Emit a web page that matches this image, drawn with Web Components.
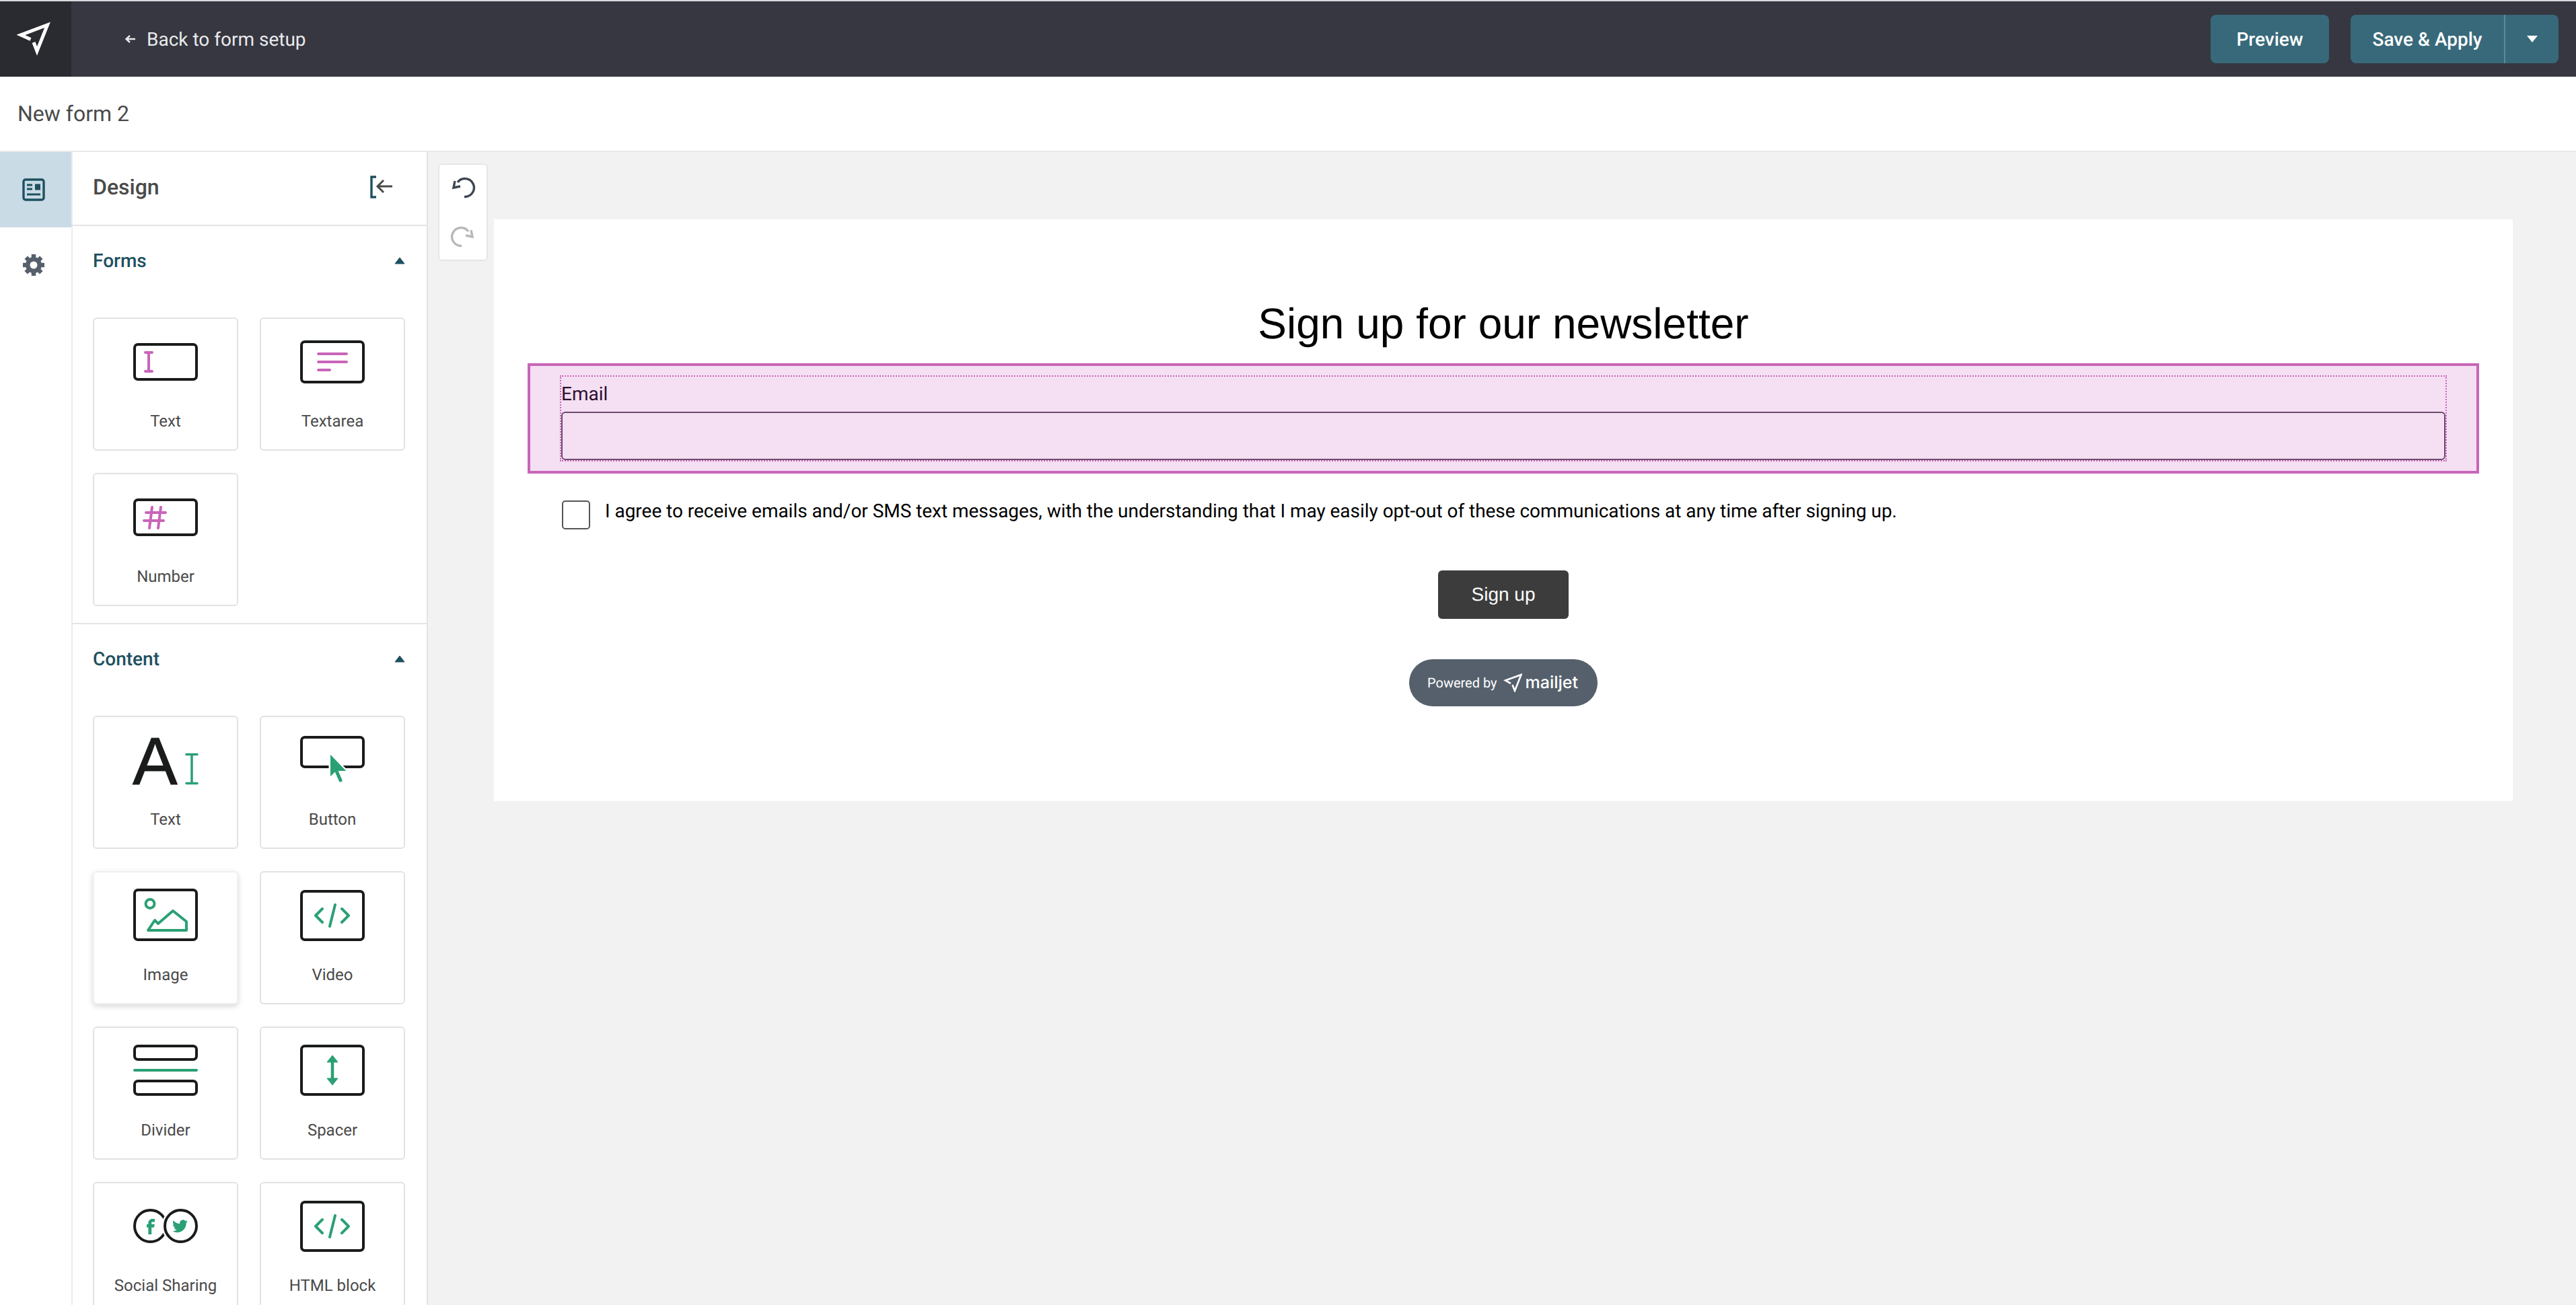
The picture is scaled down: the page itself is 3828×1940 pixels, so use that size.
<!DOCTYPE html>
<html lang="en">
<head>
<meta charset="utf-8">
<title>New form 2</title>
<style>
    html, body { margin: 0; height: 100%; overflow: hidden; }
    body { font-family: Roboto, "Liberation Sans", sans-serif; background: #f2f2f2; text-rendering: geometricPrecision; }
    #app { display: flex; flex-direction: column; height: 1940px; opacity: 0.999; }
</style>
</head>
<body>
<div id="app">
    <app-header></app-header>
    <title-bar>New form 2</title-bar>
    <builder-main>
        <side-rail></side-rail>
        <side-panel>
            <panel-section heading="Forms">
                <tool-card icon="field">Text</tool-card>
                <tool-card icon="textarea">Textarea</tool-card>
                <tool-card icon="number">Number</tool-card>
            </panel-section>
            <panel-section heading="Content">
                <tool-card icon="text">Text</tool-card>
                <tool-card icon="button">Button</tool-card>
                <tool-card icon="image" hover>Image</tool-card>
                <tool-card icon="code">Video</tool-card>
                <tool-card icon="divider">Divider</tool-card>
                <tool-card icon="spacer">Spacer</tool-card>
                <tool-card icon="social">Social Sharing</tool-card>
                <tool-card icon="code">HTML block</tool-card>
            </panel-section>
        </side-panel>
        <undo-bar></undo-bar>
        <form-canvas>
            <h1 slot="title">Sign up for our newsletter</h1>
            <email-field slot="field">Email</email-field>
            <consent-row slot="consent">I agree to receive emails and/or SMS text messages, with the understanding that I may easily opt-out of these communications at any time after signing up.</consent-row>
        </form-canvas>
    </builder-main>
</div>

<script>
const INK = "#1a1c1c";
const GREEN = "#2aa074";
const PINK = "#c865b9";

const box = (y, h) => `<rect x="2" y="${y}" width="92" height="${h}" rx="5" fill="none" stroke="${INK}" stroke-width="4"/>`;

const ICONS = {
    field: `${box(22, 52)}
        <path d="M18 34H28M18 62H28M23 34V62" fill="none" stroke="${PINK}" stroke-width="4" stroke-linecap="round"/>`,
    textarea: `${box(18, 60)}
        <path d="M27 36H69M27 48H69M27 60H44" fill="none" stroke="${PINK}" stroke-width="4" stroke-linecap="round"/>`,
    number: `${box(22, 52)}
        <path d="M19 41H48M16 53H45M28 33L24 64M41 33L37 64" fill="none" stroke="${PINK}" stroke-width="4" stroke-linecap="round"/>`,
    text: `<text x="-1" y="84" font-family="'Liberation Sans', sans-serif" font-size="100" fill="${INK}" stroke="${INK}" stroke-width="1">A</text>
        <path d="M79 39.5H95M79 82.5H95M87 39.5V82.5" fill="none" stroke="${GREEN}" stroke-width="3.5" stroke-linecap="round"/>`,
    button: `${box(14, 44)}
        <path d="M45 40V72L53 64H68Z" fill="${GREEN}" stroke="#fff" stroke-width="5" paint-order="stroke"/>
        <path d="M45 40V72L53 64H68Z" fill="${GREEN}"/>
        <path d="M53 62L60 78" fill="none" stroke="${GREEN}" stroke-width="5" stroke-linecap="round"/>`,
    image: `${box(10, 74)}
        <circle cx="25" cy="30.5" r="6.5" fill="none" stroke="${GREEN}" stroke-width="4"/>
        <path d="M22 70L32 55L37 60L59 41L79 57V70Z" fill="none" stroke="${GREEN}" stroke-width="4" stroke-linejoin="round"/>`,
    code: `${box(12, 72)}
        <path d="M33 38L23 48L33 58M62 38L72 48L62 58M52 32L44 64" fill="none" stroke="${GREEN}" stroke-width="4" stroke-linecap="round" stroke-linejoin="round"/>`,
    divider: `${box(11, 20)}${box(63, 20)}
        <path d="M2 47H94" fill="none" stroke="${GREEN}" stroke-width="4" stroke-linecap="round"/>`,
    spacer: `${box(11, 72)}
        <path d="M48 25L56 35H40ZM48 69L40 59H56Z" fill="${GREEN}" stroke="${GREEN}" stroke-linejoin="round"/>
        <path d="M48 32V62" fill="none" stroke="${GREEN}" stroke-width="4.5"/>`,
    social: `<circle cx="25.5" cy="47.5" r="23.5" fill="none" stroke="${INK}" stroke-width="4"/>
        <circle cx="70.5" cy="47.5" r="23.5" fill="#fff" stroke="#fff" stroke-width="9"/>
        <circle cx="70.5" cy="47.5" r="23.5" fill="#fff" stroke="${INK}" stroke-width="4"/>
        <path transform="translate(11.6 32.4) scale(1.2 1.15)" fill="${GREEN}" d="M14 8h3V4h-3c-2.8 0-5 2.2-5 5v2H7v4h2v9h4v-9h3l1-4h-4V9c0-.6.4-1 1-1z"/>
        <path transform="translate(58 36.3) scale(.96)" fill="${GREEN}" d="M23.953 4.57a10 10 0 01-2.825.775 4.958 4.958 0 002.163-2.723c-.951.555-2.005.959-3.127 1.184a4.92 4.92 0 00-8.384 4.482C7.69 8.095 4.067 6.13 1.64 3.162a4.822 4.822 0 00-.666 2.475c0 1.71.87 3.213 2.188 4.096a4.904 4.904 0 01-2.228-.616v.06a4.923 4.923 0 003.946 4.827 4.996 4.996 0 01-2.212.085 4.936 4.936 0 004.604 3.417 9.867 9.867 0 01-6.102 2.105c-.39 0-.779-.023-1.17-.067a13.995 13.995 0 007.557 2.209c9.053 0 13.998-7.496 13.998-13.985 0-.21 0-.42-.015-.63A9.935 9.935 0 0024 4.59z"/>`
};

class AppHeader extends HTMLElement {
    constructor() {
        super();
        this.shadowDOM = this.attachShadow({ mode: "open" });
        this.render();
    }

    render() {
        this.shadowDOM.innerHTML = `
        <style>
            :host {
                display: flex;
                align-items: center;
                flex: none;
                height: 112px;
                border-top: 2px solid #d9d9de;
                background: #363740;
                color: #e9e9ec;
                font: 400 28px Roboto, sans-serif;
            }
            .logo {
                width: 106px;
                height: 100%;
                background: #2a2b30;
                display: flex;
                align-items: center;
                justify-content: center;
            }
            .back {
                display: flex;
                align-items: center;
                gap: 16px;
                margin-left: 79px;
                flex: 1;
            }
            .btn {
                height: 72px;
                background: #37697a;
                color: #fff;
                font-weight: 500;
                border-radius: 8px;
                display: flex;
                align-items: center;
                justify-content: center;
            }
            .preview { width: 176px; margin-right: 32px; }
            .save { width: 309px; margin-right: 26px; justify-content: flex-start; }
            .save span { width: 228px; text-align: center; }
            .split { width: 79px; height: 100%; border-left: 2px solid #5b8a9a; display: flex; align-items: center; justify-content: center; }
        </style>
        <div class="logo">
            <svg width="56" height="56" viewBox="0 0 56 56">
                <path d="M20.5 28.5L6 22L45.5 7L30 46L25 33" fill="none" stroke="#fff" stroke-width="5" stroke-linejoin="miter"/>
            </svg>
        </div>
        <div class="back">
            <svg width="17" height="14" viewBox="0 0 17 14"><path d="M16 7H3M8 2L2.5 7L8 12" fill="none" stroke="#e9e9ec" stroke-width="2.4"/></svg>
            <span>Back to form setup</span>
        </div>
        <div class="btn preview">Preview</div>
        <div class="btn save">
            <span>Save &amp; Apply</span>
            <div class="split"><svg width="16" height="10" viewBox="0 0 16 10"><path d="M0 0H16L8 10Z" fill="#fff"/></svg></div>
        </div>
        `;
    }
}

class TitleBar extends HTMLElement {
    constructor() {
        super();
        this.shadowDOM = this.attachShadow({ mode: "open" });
        this.shadowDOM.innerHTML = `
        <style>
            :host {
                display: flex;
                align-items: center;
                flex: none;
                height: 112px;
                box-sizing: border-box;
                padding: 0 26px;
                background: #fff;
                border-bottom: 2px solid #e8e8e8;
                color: #4a4a4a;
                font: 400 32px Roboto, sans-serif;
            }
        </style>
        <slot></slot>
        `;
    }
}

class BuilderMain extends HTMLElement {
    constructor() {
        super();
        this.shadowDOM = this.attachShadow({ mode: "open" });
        this.shadowDOM.innerHTML = `
        <style>
            :host {
                display: flex;
                align-items: flex-start;
                flex: 1;
                min-height: 0;
                overflow: hidden;
                background: #f2f2f2;
            }
        </style>
        <slot></slot>
        `;
    }
}

class SideRail extends HTMLElement {
    constructor() {
        super();
        this.shadowDOM = this.attachShadow({ mode: "open" });
        this.shadowDOM.innerHTML = `
        <style>
            :host {
                display: block;
                flex: none;
                width: 106px;
                height: 1714px;
                background: #fff;
            }
            div {
                height: 112px;
                padding-right: 6px;
                display: flex;
                align-items: center;
                justify-content: center;
            }
            .active { background: #c9dbe5; }
        </style>
        <div class="active">
            <svg width="34" height="34" viewBox="0 0 34 34">
                <rect x="2" y="2" width="30" height="30" rx="3" fill="none" stroke="#1e5060" stroke-width="3.4"/>
                <path d="M7 10H15M7 16H15M7 24H27" fill="none" stroke="#1e5060" stroke-width="3"/>
                <rect x="19" y="8.5" width="8" height="9" fill="#1e5060"/>
            </svg>
        </div>
        <div>
            <svg width="32" height="32" viewBox="0 0 32 32">
                <circle cx="16" cy="16" r="12" fill="#56606c"/>
                <g stroke="#56606c" stroke-width="6.5">
                    <path d="M16 0V32M0 16H32M4.7 4.7L27.3 27.3M27.3 4.7L4.7 27.3"/>
                </g>
                <circle cx="16" cy="16" r="5.5" fill="#fff"/>
            </svg>
        </div>
        `;
    }
}

class SidePanel extends HTMLElement {
    constructor() {
        super();
        this.shadowDOM = this.attachShadow({ mode: "open" });
        this.shadowDOM.innerHTML = `
        <style>
            :host {
                display: block;
                flex: none;
                width: 528px;
                height: 1714px;
                background: #fff;
                box-shadow: inset 2px 0 0 #ececec, 2px 0 0 #e4e4e4;
                overflow: hidden;
            }
            header {
                height: 110px;
                box-sizing: border-box;
                border-bottom: 2px solid #e4e4e4;
                padding: 0 50px 4px 32px;
                display: flex;
                align-items: center;
                justify-content: space-between;
                color: #4a4a4a;
                font: 500 32px Roboto, sans-serif;
            }
        </style>
        <header>
            <span>Design</span>
            <svg width="34" height="34" viewBox="0 0 34 34">
                <path d="M9 2H2V32H9" fill="none" stroke="#1e5060" stroke-width="3.4"/>
                <path d="M33 16H11M20 7L11 16L20 25" fill="none" stroke="#4a4a4a" stroke-width="3"/>
            </svg>
        </header>
        <slot></slot>
        `;
    }
}

class PanelSection extends HTMLElement {
    constructor() {
        super();
        this.shadowDOM = this.attachShadow({ mode: "open" });
        this.shadowDOM.innerHTML = `
        <style>
            :host {
                display: block;
                border-bottom: 2px solid #e4e4e4;
                padding: 0 32px 25px;
            }
            .head {
                box-sizing: border-box;
                height: 104px;
                padding-bottom: 2px;
                margin-bottom: 32px;
                display: flex;
                align-items: center;
                justify-content: space-between;
                color: #1e5060;
                font: 500 28px Roboto, sans-serif;
            }
            .grid {
                display: grid;
                grid-template-columns: 216px 216px;
                column-gap: 32px;
                row-gap: 33px;
            }
        </style>
        <div class="head">
            <span>${this.getAttribute("heading")}</span>
            <svg width="16" height="11" viewBox="0 0 16 11"><path d="M8 1L15 10H1Z" fill="#1e5060" stroke="#1e5060" stroke-width="1" stroke-linejoin="round"/></svg>
        </div>
        <div class="grid"><slot></slot></div>
        `;
    }
}

class ToolCard extends HTMLElement {
    constructor() {
        super();
        this.shadowDOM = this.attachShadow({ mode: "open" });
        this.shadowDOM.innerHTML = `
        <style>
            :host {
                display: flex;
                flex-direction: column;
                align-items: center;
                box-sizing: border-box;
                height: 198px;
                padding-top: 16px;
                background: #fff;
                border: 2px solid #e2e2e2;
                border-radius: 6px;
                color: #4a4a4a;
                font: 400 24px/28px Roboto, sans-serif;
            }
            :host([hover]) {
                border-color: #f0f0f0;
                box-shadow: 0 3px 8px rgba(0, 0, 0, 0.16);
            }
            svg { display: block; overflow: visible; }
            .label { margin-top: 26px; }
        </style>
        <svg width="96" height="96" viewBox="0 0 96 96">${ICONS[this.getAttribute("icon")]}</svg>
        <div class="label"><slot></slot></div>
        `;
    }
}

class UndoBar extends HTMLElement {
    constructor() {
        super();
        this.shadowDOM = this.attachShadow({ mode: "open" });
        const arrow = `<path d="M12 13A13.5 13.5 0 1 1 22 34.5M8 11L6 21L16 19" fill="none" stroke="currentColor" stroke-width="3.4"/>`;
        this.shadowDOM.innerHTML = `
        <style>
            :host {
                display: block;
                flex: none;
                box-sizing: border-box;
                width: 74px;
                height: 145px;
                margin: 17px 0 0 17px;
                padding-top: 1px;
                background: #fff;
                border: 2px solid #e6e6e6;
                border-radius: 6px;
            }
            svg { display: block; margin: 0 auto; }
            .undo { color: #3d4650; margin-top: 12px; }
            .redo { color: #b8b8b8; margin-top: 33px; transform: scaleX(-1); }
        </style>
        <svg class="undo" width="40" height="40" viewBox="0 0 40 40">${arrow}</svg>
        <svg class="redo" width="40" height="40" viewBox="0 0 40 40">${arrow}</svg>
        `;
    }
}

class FormCanvas extends HTMLElement {
    constructor() {
        super();
        this.shadowDOM = this.attachShadow({ mode: "open" });
        this.shadowDOM.innerHTML = `
        <style>
            :host {
                display: block;
                flex: none;
                box-sizing: border-box;
                width: 3000px;
                height: 865px;
                margin: 100px 0 0 9px;
                padding-top: 115px;
                background: #fff;
                font-family: "Liberation Sans", Arial, sans-serif;
            }
            ::slotted(h1) {
                margin: 0 0 19px;
                height: 80px;
                text-align: center;
                color: #000;
                font: 400 64px/80px "Liberation Sans", Arial, sans-serif;
            }
            .submit {
                width: 194px;
                height: 72px;
                margin: 61px auto 60px;
                background: #3c3c3c;
                border-radius: 6px;
                color: #fff;
                font-size: 28px;
                display: flex;
                align-items: center;
                justify-content: center;
            }
            .brand {
                width: 280px;
                height: 70px;
                margin: 0 auto;
                box-sizing: border-box;
                padding-left: 27px;
                background: #56606c;
                border-radius: 35px;
                color: #fff;
                display: flex;
                align-items: center;
            }
            .by { font: 400 20px Roboto, sans-serif; margin-right: 9px; }
            .word { font: 500 25px Inter, sans-serif; margin-left: 5px; }
        </style>
        <slot name="title"></slot>
        <slot name="field"></slot>
        <slot name="consent"></slot>
        <div class="submit">Sign up</div>
        <div class="brand">
            <span class="by">Powered by</span>
            <svg width="28" height="28" viewBox="0 0 28 28"><path d="M11 15L3 10.5L26.5 2L17 26L13.5 17" fill="none" stroke="#fff" stroke-width="2.6"/></svg>
            <span class="word">mailjet</span>
        </div>
        `;
    }
}

class EmailField extends HTMLElement {
    constructor() {
        super();
        this.shadowDOM = this.attachShadow({ mode: "open" });
        this.shadowDOM.innerHTML = `
        <style>
            :host {
                display: block;
                box-sizing: border-box;
                height: 164px;
                margin: 0 50px;
                padding: 14px 44px;
                background: #f5dff3;
                border: 4px solid #c865b9;
            }
            .dotted {
                box-sizing: border-box;
                height: 128px;
                border: 2px dotted #c865b9;
            }
            .label {
                box-sizing: border-box;
                height: 52px;
                padding-bottom: 2px;
                display: flex;
                align-items: center;
                color: #2c1030;
                font: 400 28px Roboto, sans-serif;
            }
            .input {
                box-sizing: border-box;
                height: 72px;
                border: 2px solid #6b4c6b;
                border-radius: 6px;
            }
        </style>
        <div class="dotted">
            <div class="label"><slot></slot></div>
            <div class="input"></div>
        </div>
        `;
    }
}

class ConsentRow extends HTMLElement {
    constructor() {
        super();
        this.shadowDOM = this.attachShadow({ mode: "open" });
        this.shadowDOM.innerHTML = `
        <style>
            :host {
                display: flex;
                align-items: flex-start;
                margin: 40px 0 0 101px;
                color: #000;
                font: 400 28px/30px Roboto, sans-serif;
                letter-spacing: -0.035px;
            }
            .box {
                box-sizing: border-box;
                width: 42px;
                height: 43px;
                margin-right: 22px;
                border: 2px solid #555;
                border-radius: 5px;
            }
            .text { margin-top: 1px; }
        </style>
        <div class="box"></div>
        <div class="text"><slot></slot></div>
        `;
    }
}

customElements.define("app-header", AppHeader);
customElements.define("title-bar", TitleBar);
customElements.define("builder-main", BuilderMain);
customElements.define("side-rail", SideRail);
customElements.define("side-panel", SidePanel);
customElements.define("panel-section", PanelSection);
customElements.define("tool-card", ToolCard);
customElements.define("undo-bar", UndoBar);
customElements.define("form-canvas", FormCanvas);
customElements.define("email-field", EmailField);
customElements.define("consent-row", ConsentRow);
</script>
</body>
</html>
